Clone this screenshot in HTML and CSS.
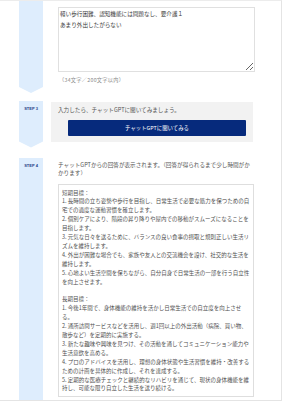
FILE: index.html
```html
<!DOCTYPE html>
<html lang="ja">
<head>
<meta charset="utf-8">
<title>チャットGPT ケアプラン</title>
<link rel="stylesheet" href="styles.css">
</head>
<body>
<div class="card">
  <div class="step step-first">
    <div class="step-side"></div>
    <div class="step-body">
      <textarea class="input-box" readonly>軽い歩行困難、認知機能には問題なし、要介護１
あまり外出したがらない</textarea>
      <p class="counter">（34文字／200文字以内）</p>
    </div>
  </div>

  <div class="step">
    <div class="step-side"><span class="step-label">STEP 3</span></div>
    <div class="step-body step-body-gray">
      <p class="step-text">入力したら、チャットGPTに聞いてみましょう。</p>
      <button class="ask-btn" type="button">チャットGPTに聞いてみる</button>
    </div>
  </div>

  <div class="step step-last">
    <div class="step-side"><span class="step-label">STEP 4</span></div>
    <div class="step-body step-body-last">
      <p class="step-text">チャットGPTからの回答が表示されます。（回答が得られるまで少し時間がかかります）</p>
      <div class="result-box">
        <p>短期目標：</p>
        <p>1. 長時間の立ち姿勢や歩行を目指し、日常生活で必要な筋力を保つための自宅での適度な運動習慣を確立します。</p>
        <p>2. 個別ケアにより、階段の昇り降りや屋内での移動がスムーズになることを目指します。</p>
        <p>3. 元気な日々を送るために、バランスの良い食事の摂取と規則正しい生活リズムを維持します。</p>
        <p>4. 外出が困難な場合でも、家族や友人との交流機会を設け、社交的な生活を維持します。</p>
        <p>5. 心地よい生活空間を保ちながら、自分自身で日常生活の一部を行う自立性を向上させます。</p>
        <p class="blank">&nbsp;</p>
        <p>長期目標：</p>
        <p>1. 今後1年間で、身体機能の維持を活かし日常生活での自立度を向上させる。</p>
        <p>2. 通所訪問サービスなどを活用し、週1回以上の外出活動（病院、買い物、散歩など）を定期的に実施する。</p>
        <p>3. 新たな趣味や興味を見つけ、その活動を通してコミュニケーション能力や生活意欲を高める。</p>
        <p>4. プロのアドバイスを活用し、理想の身体状態や生活習慣を維持・改善するための計画を具体的に作成し、それを達成する。</p>
        <p>5. 定期的な医療チェックと継続的なリハビリを通じて、現状の身体機能を維持し、可能な限り自立した生活を送り続ける。</p>
      </div>
    </div>
  </div>
</div>
</body>
</html>
```

FILE: styles.css
```css
* {
  box-sizing: border-box;
}

html, body {
  margin: 0;
  padding: 0;
  background: #ffffff;
}

body {
  font-family: "Noto Sans CJK JP", "Noto Sans", sans-serif;
  color: #555555;
}

p {
  margin: 0;
}

.card {
  width: 282px;
  height: 401px;
  overflow: hidden;
  border-top: 1px solid #ececec;
  border-right: 1px solid #e4e4e4;
  border-bottom: 1px solid #e4e4e4;
  padding: 0 27px 0 19px;
  display: flex;
  flex-direction: column;
  gap: 8px;
}

.step {
  display: flex;
  gap: 8px;
  align-items: stretch;
}

.step-side {
  width: 24px;
  flex: none;
  background: #deedfd;
  clip-path: polygon(0 0, 100% 0, 100% calc(100% - 6px), 50% 100%, 0 calc(100% - 6px));
  display: flex;
  justify-content: center;
  align-items: flex-start;
}

.step-label {
  font-family: "Liberation Sans", Arial, sans-serif;
  font-weight: bold;
  font-size: 4px;
  line-height: 5px;
  color: #1f3f86;
  margin-top: 5px;
}

.step-body {
  flex: 1;
  min-width: 0;
  padding: 0 0 0 7px;
  margin-bottom: 6px;
}

.step-first .step-body {
  padding-top: 6px;
  padding-bottom: 4px;
}

.input-box {
  display: block;
  width: 197px;
  height: 65px;
  margin: 0;
  padding: 1px 1px;
  border: 1px solid #e0e0e0;
  border-radius: 0;
  font-family: "Noto Sans CJK JP", sans-serif;
  font-size: 5.6px;
  line-height: 10.6px;
  color: #3a3a3a;
  background: #ffffff;
  resize: vertical;
  overflow: hidden;
}

.counter {
  font-size: 5.2px;
  line-height: 7px;
  letter-spacing: 0.3px;
  color: #8a8a8a;
  margin-top: 4px;
  padding-left: 1px;
}

.step-body-gray {
  background: #f2f2f2;
  padding: 4px 7px 6px 7px;
  margin-top: 1px;
  flex: none;
  width: 202px;
}

.step-text {
  font-size: 5.6px;
  line-height: 8.5px;
  color: #555555;
}

.ask-btn {
  display: block;
  margin: 5px 0 0 10px;
  width: 178px;
  height: 16px;
  padding: 0;
  border: none;
  border-radius: 1px;
  background: #062a7c;
  color: #ffffff;
  font-family: "Noto Sans CJK JP", sans-serif;
  font-size: 5.4px;
  line-height: 16px;
  text-align: center;
}

.step-last {
  flex: 1;
  margin-top: 2px;
}

.step-last .step-side {
  clip-path: none;
}

.step-body-last {
  padding-top: 3px;
  margin-bottom: 0;
}

.result-box {
  margin-top: 6px;
  border: 1px solid #dedede;
  padding: 4px 3px 4px 3px;
  height: 213px;
  overflow: hidden;
  font-size: 5.5px;
  line-height: 8.9px;
  color: #505050;
}
```
